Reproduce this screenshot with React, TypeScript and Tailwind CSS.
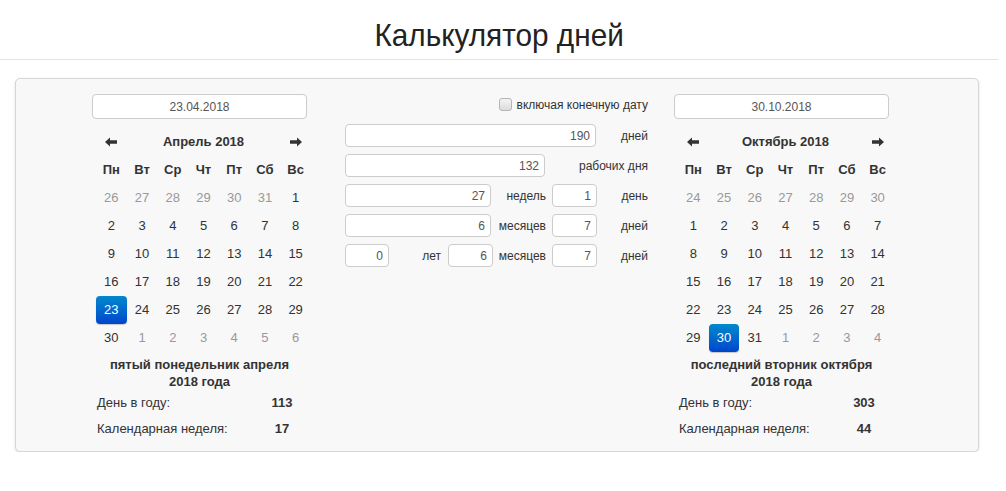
import React from 'react';

type Day = { d: number; muted?: boolean; active?: boolean };

const weekdays = ['Пн', 'Вт', 'Ср', 'Чт', 'Пт', 'Сб', 'Вс'];

const build = (prevStart: number, prevEnd: number, count: number, active: number): Day[][] => {
  const cells: Day[] = [];
  for (let i = prevStart; i <= prevEnd; i++) cells.push({ d: i, muted: true });
  for (let i = 1; i <= count; i++) cells.push({ d: i, active: i === active });
  let n = 1;
  while (cells.length < 42) cells.push({ d: n++, muted: true });
  const rows: Day[][] = [];
  for (let r = 0; r < 6; r++) rows.push(cells.slice(r * 7, r * 7 + 7));
  return rows;
};

const Arrow = ({ dir }: { dir: 'left' | 'right' }) => (
  <svg width="12" height="10" viewBox="0 0 12 10" className={dir === 'right' ? 'rotate-180' : ''}>
    <path d="M0 5 L5 0.5 L5 3.3 L12 3.3 L12 6.7 L5 6.7 L5 9.5 Z" fill="#333" />
  </svg>
);

const DateColumn = ({
  value,
  title,
  rows,
  caption,
  dayOfYear,
  week,
}: {
  value: string;
  title: string;
  rows: Day[][];
  caption: string;
  dayOfYear: number;
  week: number;
}) => (
  <div className="w-[215px] flex flex-col">
    <div className="h-[25px] rounded-[4px] border border-[#ccc] bg-white flex items-center justify-center text-[12px] text-[#555]">
      {value}
    </div>
    <div className="ml-[4px] w-[215px] mt-[9px] text-[13px]">
      <div className="grid grid-cols-7 h-[28px] items-center">
        <div className="flex justify-center"><Arrow dir="left" /></div>
        <div className="col-span-5 text-center font-bold">{title}</div>
        <div className="flex justify-center"><Arrow dir="right" /></div>
      </div>
      <div className="grid grid-cols-7">
        {weekdays.map(w => (
          <div key={w} className="h-[28px] flex items-center justify-center font-bold">{w}</div>
        ))}
        {rows.flat().map((c, i) => (
          <div
            key={i}
            className={
              c.active
                ? 'h-[28px] flex items-center justify-center text-white rounded-[4px] bg-gradient-to-b from-[#0088cc] to-[#0044cc] shadow-[0_1px_1px_rgba(0,0,0,0.2)]'
                : c.muted
                ? 'h-[28px] flex items-center justify-center text-[#999]'
                : 'h-[28px] flex items-center justify-center'
            }
          >
            {c.d}
          </div>
        ))}
      </div>
    </div>
    <div className="mt-[4px] text-center font-bold text-[13px] leading-[17px]">
      <div>{caption}</div>
      <div>2018 года</div>
    </div>
    <div className="flex h-[26px] items-center text-[13px]">
      <div className="w-[165px] pl-[5px]">День в году:</div>
      <div className="w-[50px] text-center font-bold">{dayOfYear}</div>
    </div>
    <div className="flex h-[26px] items-center text-[13px]">
      <div className="w-[165px] pl-[5px]">Календарная неделя:</div>
      <div className="w-[50px] text-center font-bold">{week}</div>
    </div>
  </div>
);

const Field = ({ value, w }: { value: string; w: string }) => (
  <div className={`${w} h-[23px] rounded-[4px] border border-[#ccc] bg-white flex items-center justify-end pr-[5px] text-[12px] text-[#555] shrink-0`}>
    {value}
  </div>
);

export default function App() {
  const april = build(26, 31, 30, 23);
  const october = build(24, 30, 31, 30);

  return (
    <div className="w-[998px] text-[#333]" style={{ fontFamily: '"Liberation Sans", Arial, sans-serif' }}>
      <div className="h-[60px] border-b border-[#e2e2e2] flex items-center justify-center pt-[18px] pb-[8px]">
        <h1 className="inline-block scale-x-[0.93] text-[32px] leading-none text-[#222]">
          Калькулятор дней
        </h1>
      </div>

      <div className="ml-[15px] mt-[18px] w-[964px] h-[374px] rounded-[5px] border border-[#d6d6d6] bg-[#f8f8f8] shadow-[0_1px_3px_rgba(0,0,0,0.12)] flex pl-[76px] pt-[15px]">
        <DateColumn
          value="23.04.2018"
          title="Апрель 2018"
          rows={april}
          caption="пятый понедельник апреля"
          dayOfYear={113}
          week={17}
        />

        <div className="ml-[38px] w-[303px] flex flex-col text-[12px]">
          <div className="h-[23px] flex items-center justify-end mt-[-1px]">
            <span className="w-[13px] h-[13px] rounded-[3px] border border-[#b5b5b5] bg-gradient-to-b from-[#f4f4f4] to-[#dcdcdc] mr-[5px]" />
            <span>включая конечную дату</span>
          </div>
          <div className="mt-[8px] flex flex-col gap-[7px]">
            <div className="flex items-center">
              <Field value="190" w="w-[251px]" />
              <div className="flex-1 text-right">дней</div>
            </div>
            <div className="flex items-center">
              <Field value="132" w="w-[200px]" />
              <div className="flex-1 text-right">рабочих дня</div>
            </div>
            <div className="flex items-center">
              <Field value="27" w="w-[146px]" />
              <div className="w-[61px] text-right pr-[6px]">недель</div>
              <Field value="1" w="w-[45px]" />
              <div className="flex-1 text-right">день</div>
            </div>
            <div className="flex items-center">
              <Field value="6" w="w-[146px]" />
              <div className="w-[61px] text-right pr-[6px]">месяцев</div>
              <Field value="7" w="w-[45px]" />
              <div className="flex-1 text-right">дней</div>
            </div>
            <div className="flex items-center">
              <Field value="0" w="w-[44px]" />
              <div className="w-[59px] text-right pr-[7px]">лет</div>
              <Field value="6" w="w-[45px]" />
              <div className="w-[59px] text-right pr-[6px]">месяцев</div>
              <Field value="7" w="w-[45px]" />
              <div className="flex-1 text-right">дней</div>
            </div>
          </div>
        </div>

        <div className="ml-[26px]">
          <DateColumn
            value="30.10.2018"
            title="Октябрь 2018"
            rows={october}
            caption="последний вторник октября"
            dayOfYear={303}
            week={44}
          />
        </div>
      </div>
    </div>
  );
}
